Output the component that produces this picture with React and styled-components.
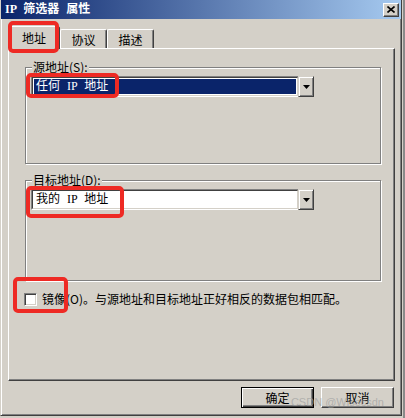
import React from 'react';
import styled, { createGlobalStyle } from 'styled-components';

const GlobalStyle = createGlobalStyle`
  html, body {
    margin: 0;
    padding: 0;
    background: #d4d0c8;
    width: 405px;
    height: 418px;
    overflow: hidden;
  }
  body {
    font-family: "Noto Sans CJK SC", "Liberation Sans", sans-serif;
    font-size: 12px;
    color: #000;
  }
`;

const Window = styled.div`
  position: relative;
  box-sizing: border-box;
  width: 402px;
  height: 416px;
  background: #d4d0c8;
  border: 1px solid;
  border-top: none;
  border-color: #d4d0c8 #404040 #404040 #d4d0c8;
  box-shadow: inset 1px 0 0 #fff, inset -1px -1px 0 #808080;
  padding: 0 2px 2px 2px;
`;

const TitleBar = styled.div`
  height: 19px;
  margin: 0 -2px;
  padding: 0 2px 0 4px;
  display: flex;
  align-items: center;
  justify-content: space-between;
  background: linear-gradient(to right, #0a246a, #a6caf0);
  color: #fff;
  font-family: "Liberation Serif", "Noto Sans CJK SC", serif;
  font-weight: bold;
  font-size: 12px;
  line-height: 19px;
  word-spacing: 4px;
`;

const CloseButton = styled.div`
  box-sizing: border-box;
  width: 16px;
  height: 14px;
  background: #d4d0c8;
  border: 1px solid;
  border-color: #fff #404040 #404040 #fff;
  box-shadow: inset -1px -1px 0 #808080;
  display: flex;
  align-items: center;
  justify-content: center;
`;

const Body = styled.div`
  padding: 7px 4px 0 5px;
`;

const TabStrip = styled.div`
  display: flex;
  align-items: flex-end;
  height: 22px;
  position: relative;
  z-index: 1;
`;

const Tab = styled.div`
  position: relative;
  box-sizing: border-box;
  width: ${p => (p.$active ? 52 : 47)}px;
  height: ${p => (p.$active ? 23 : 19)}px;
  margin-bottom: ${p => (p.$active ? -1 : 0)}px;
  background: #d4d0c8;
  border-top: 1px solid #fff;
  border-left: 1px solid #fff;
  border-right: 1px solid #404040;
  border-radius: 2px 2px 0 0;
  box-shadow: inset -1px 0 0 #808080;
  display: flex;
  align-items: center;
  justify-content: center;
  padding-top: 1px;
  padding-bottom: ${p => (p.$active ? 1 : 0)}px;
  line-height: 14px;
`;

const Panel = styled.div`
  box-sizing: border-box;
  width: 387px;
  height: 333px;
  background: #d4d0c8;
  border: 1px solid;
  border-color: #fff #404040 #404040 #fff;
  box-shadow: inset -1px -1px 0 #808080;
  padding: 18px 0 0 16px;
`;

const Group = styled.div`
  position: relative;
  box-sizing: border-box;
  width: 356px;
  height: ${p => p.$h}px;
  margin-bottom: ${p => p.$mb || 0}px;
  border: 1px solid #808080;
  box-shadow: 1px 1px 0 #fff, inset 1px 1px 0 #fff;
  padding: 8px 0 0 5px;
`;

const GroupLabel = styled.span`
  position: absolute;
  top: -8px;
  left: 6px;
  padding: 0 1px;
  background: #d4d0c8;
  line-height: 14px;
`;

const Combo = styled.div`
  position: relative;
  box-sizing: border-box;
  width: 283px;
  height: 21px;
  border: 1px solid;
  border-color: #808080 #fff #fff #808080;
  background: #fff;
  display: flex;
`;

const ComboInner = styled.div`
  flex: 1;
  display: flex;
  border: 1px solid;
  border-color: #404040 #d4d0c8 #d4d0c8 #404040;
  padding: 1px;
`;

const ComboValue = styled.div`
  flex: 1;
  padding-left: 2px;
  line-height: 15px;
  font-family: "Liberation Serif", "Noto Sans CJK SC", serif;
  word-spacing: 4px;
  background: ${p => (p.$selected ? '#0a246a' : '#fff')};
  color: ${p => (p.$selected ? '#fff' : '#000')};
  white-space: pre;
`;

const DropButton = styled.div`
  box-sizing: border-box;
  width: 16px;
  margin: -1px -1px -1px 0;
  background: #d4d0c8;
  border: 1px solid;
  border-color: #d4d0c8 #404040 #404040 #d4d0c8;
  box-shadow: inset 1px 1px 0 #fff, inset -1px -1px 0 #808080;
  display: flex;
  align-items: center;
  justify-content: center;
`;

const Mark = styled.div`
  position: absolute;
  top: ${p => p.$t}px;
  left: ${p => p.$l}px;
  width: ${p => p.$w}px;
  height: ${p => p.$h}px;
  box-sizing: border-box;
  border: 4px solid #ee2a24;
  border-radius: 5px;
  pointer-events: none;
  z-index: 5;
`;

const CheckRow = styled.div`
  position: relative;
  display: flex;
  align-items: center;
  margin: 11px 0 0 -1px;
  gap: 5px;
  line-height: 14px;
`;

const CheckBox = styled.div`
  box-sizing: border-box;
  width: 13px;
  height: 13px;
  background: #fff;
  border: 1px solid;
  border-color: #808080 #fff #fff #808080;
  box-shadow: inset 1px 1px 0 #404040, inset -1px -1px 0 #d4d0c8;
`;

const ButtonRow = styled.div`
  position: relative;
  display: flex;
  justify-content: flex-end;
  gap: 7px;
  width: 386px;
  margin-top: 6px;
`;

const Button = styled.div`
  box-sizing: border-box;
  width: 73px;
  height: 21px;
  background: #d4d0c8;
  border: 1px solid;
  border-color: ${p => (p.$default ? '#000' : '#fff #404040 #404040 #fff')};
  box-shadow: ${p =>
    p.$default
      ? 'inset 1px 1px 0 #fff, inset -1px -1px 0 #404040, inset -2px -2px 0 #808080'
      : 'inset -1px -1px 0 #808080'};
  display: flex;
  align-items: center;
  justify-content: center;
  line-height: 14px;
`;

const Watermark = styled.div`
  position: absolute;
  right: 10px;
  bottom: 0;
  font-family: "Liberation Sans", sans-serif;
  font-size: 11px;
  line-height: 12px;
  color: rgba(160, 160, 160, 0.7);
  pointer-events: none;
`;

const SideEdge = styled.div`
  position: absolute;
  top: 0;
  right: -4px;
  width: 2px;
  height: 418px;
  background: #8a8a8a;
`;

const Arrow = () => (
  <svg width="7" height="4" viewBox="0 0 7 4">
    <path d="M0 0h7L3.5 4z" fill="#000" />
  </svg>
);

const CloseIcon = () => (
  <svg width="8" height="7" viewBox="0 0 8 7">
    <path d="M0.5 0.5L7.5 6.5M7.5 0.5L0.5 6.5" stroke="#000" strokeWidth="1.6" />
  </svg>
);

export default function App() {
  return (
    <>
      <GlobalStyle />
      <Window>
        <SideEdge />
        <TitleBar>
          <span>IP 筛选器 属性</span>
          <CloseButton><CloseIcon /></CloseButton>
        </TitleBar>
        <Body>
          <TabStrip>
            <Tab $active>
              地址
              <Mark $t={-6} $l={-1} $w={51} $h={32} />
            </Tab>
            <Tab>协议</Tab>
            <Tab>描述</Tab>
          </TabStrip>
          <Panel>
            <Group $h={97} $mb={16}>
              <GroupLabel>源地址(S):</GroupLabel>
              <Combo>
                <ComboInner>
                  <ComboValue $selected>{'任何 IP 地址'}</ComboValue>
                </ComboInner>
                <DropButton><Arrow /></DropButton>
                <Mark $t={-4} $l={-6} $w={93} $h={25} />
              </Combo>
            </Group>
            <Group $h={101}>
              <GroupLabel>目标地址(D):</GroupLabel>
              <Combo>
                <ComboInner>
                  <ComboValue>{'我的 IP 地址'}</ComboValue>
                </ComboInner>
                <DropButton><Arrow /></DropButton>
                <Mark $t={-4} $l={-6} $w={98} $h={32} />
              </Combo>
            </Group>
            <CheckRow>
              <CheckBox />
              <span>镜像(O)。与源地址和目标地址正好相反的数据包相匹配。</span>
              <Mark $t={-15} $l={-11} $w={55} $h={36} />
            </CheckRow>
          </Panel>
          <ButtonRow>
            <Button $default>确定</Button>
            <Button>取消</Button>
            <Watermark>CSDN @Wisecsdn</Watermark>
          </ButtonRow>
        </Body>
      </Window>
    </>
  );
}
